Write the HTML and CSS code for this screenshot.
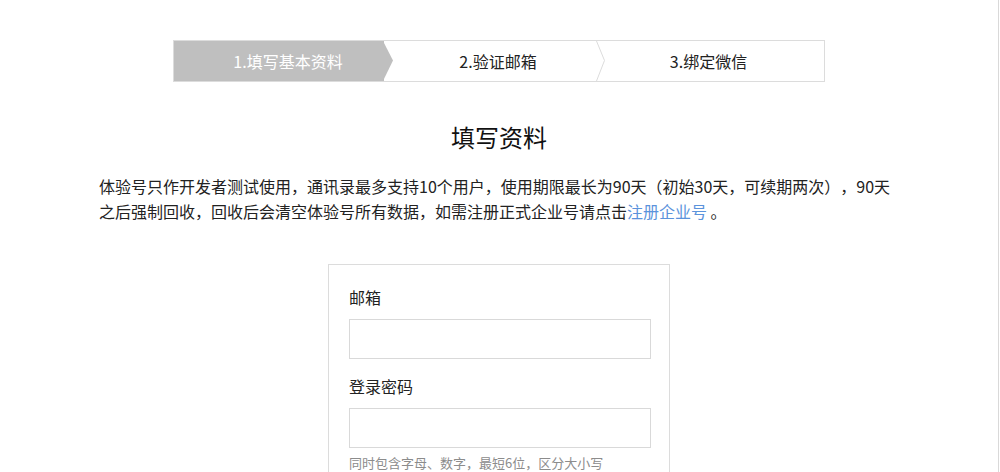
FILE: index.html
```html
<!DOCTYPE html>
<html lang="zh-CN">
  <head>
    <meta charset="UTF-8" />
    <meta name="viewport" content="width=device-width, initial-scale=1.0" />
    <title>填写资料</title>
    <link rel="stylesheet" href="styles.css">
  </head>
  <body>
    <div class="page">
      <div class="main">
        <div class="steps">
          <div class="step step-active">
            1.填写基本资料
            <svg class="step-arrow" width="11" height="40" viewBox="0 0 11 40">
              <polygon points="0,0 10,19.5 0,40" fill="#bfbfbf" />
            </svg>
          </div>
          <div class="step step-second">
            2.验证邮箱
            <svg class="step-chevron" width="10" height="40" viewBox="0 0 10 40">
              <polyline points="0.5,0 8.5,19.5 0.5,40" fill="none" stroke="#dcdcdc" stroke-width="1" />
            </svg>
          </div>
          <div class="step step-third">3.绑定微信</div>
        </div>

        <h2 class="title">填写资料</h2>

        <p class="notice">体验号只作开发者测试使用，通讯录最多支持10个用户，使用期限最长为90天（初始30天，可续期两次），90天之后强制回收，回收后会清空体验号所有数据，如需注册正式企业号请点击<a href="#" class="notice-link">注册企业号</a> 。</p>

        <form class="form-box">
          <div class="form-group">
            <label for="email">邮箱</label>
            <input type="text" id="email" />
          </div>
          <div class="form-group">
            <label for="password">登录密码</label>
            <input type="password" id="password" />
            <div class="hint">同时包含字母、数字，最短6位，区分大小写</div>
          </div>
        </form>
      </div>
    </div>
  </body>
</html>
```

FILE: styles.css
```css
body {
    font-family: "Noto Sans CJK SC", "Microsoft YaHei", sans-serif;
    background-color: #fff;
    color: #222;
    margin: 0;
    text-spacing-trim: space-all;
}

.page {
    width: 998px;
    min-height: 100vh;
    border-right: 1px solid #d9d9d9;
    overflow: hidden;
}

.main {
    width: 995px;
    margin: 0 auto;
}

.steps {
    display: flex;
    width: 650px;
    height: 40px;
    margin: 40px auto 0;
    border: 1px solid #dcdcdc;
}

.step {
    position: relative;
    line-height: 40px;
    font-size: 16px;
    text-align: center;
    color: #222;
}

.step-active {
    width: 188px;
    padding-left: 20px;
    padding-right: 2px;
    background-color: #bfbfbf;
    color: #fff;
}

.step-second {
    width: 198px;
    padding-left: 15px;
}

.step-third {
    flex: 1;
    padding-right: 4px;
}

.step-arrow {
    position: absolute;
    top: 0;
    right: -10px;
    z-index: 1;
}

.step-chevron {
    position: absolute;
    top: 0;
    right: -9px;
}

.title {
    margin: 40px 0 0;
    font-size: 24px;
    font-weight: normal;
    line-height: 30px;
    text-align: center;
    color: #111;
}

.notice {
    width: 800px;
    margin: 22px auto 0;
    font-size: 16px;
    line-height: 25px;
}

.notice-link {
    color: #5b93dc;
    text-decoration: none;
}

.form-box {
    width: 300px;
    margin: 40px auto 0;
    padding: 20px 20px 20px;
    border: 1px solid #dcdcdc;
}

.form-group {
    margin-bottom: 15px;
}

.form-group label {
    display: block;
    font-size: 16px;
    line-height: 24px;
    margin-bottom: 10px;
}

.form-group input {
    display: block;
    box-sizing: border-box;
    width: 302px;
    height: 40px;
    border: 1px solid #d9d9d9;
    padding: 0 10px;
    font-size: 14px;
    outline: none;
}

.hint {
    margin-top: 5px;
    font-size: 13px;
    line-height: 20px;
    color: #8c8c8c;
}
```
